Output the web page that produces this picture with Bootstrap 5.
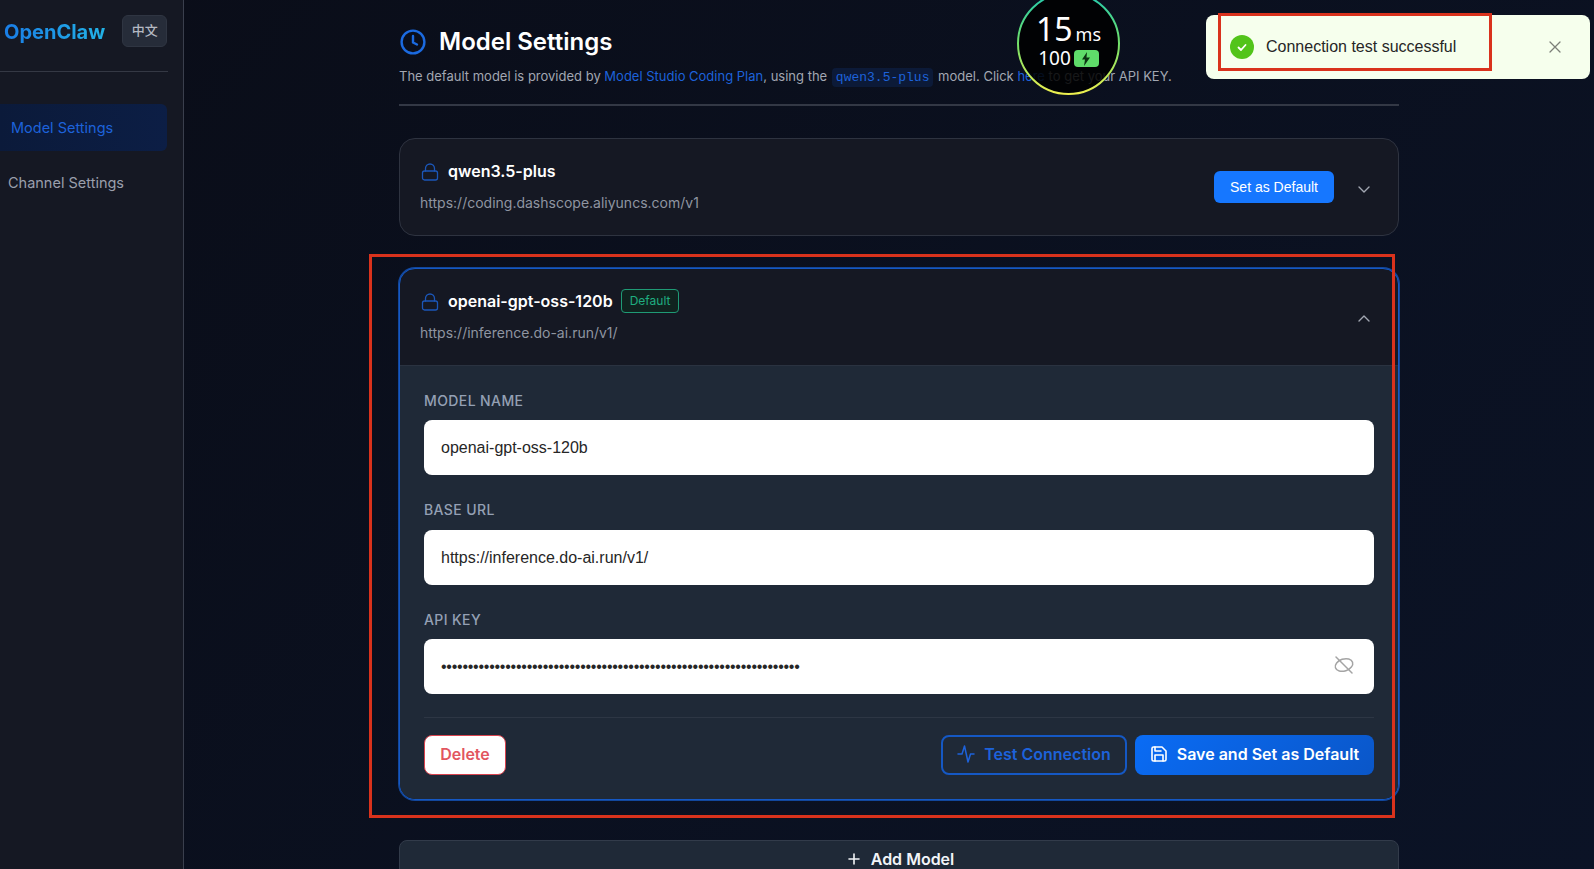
<!doctype html>
<html lang="en">
<head>
<meta charset="utf-8">
<title>Model Settings</title>
<link href="https://cdn.jsdelivr.net/npm/bootstrap@5.3.3/dist/css/bootstrap.min.css" rel="stylesheet">
<style>
  html, body { height: 100%; overflow: hidden; }
  body { background: linear-gradient(135deg, #0a0d18, #0b1326); font-family: Inter, "Noto Sans CJK SC", sans-serif; color: #fff; }
  .app-shell { height: 869px; }

  /* sidebar */
  .side-bar { width: 184px; flex: none; background: #151823; border-right: 1px solid #3a3f4d; }
  .brand-row { height: 72px; margin-right: 15px; padding: 15px 0 0 4px; border-bottom: 1px solid #343844; align-items: flex-start; }
  .brand-name { font-size: 20px; font-weight: 700; line-height: 32px; margin-top: 1px; background: linear-gradient(90deg, #1a7de6, #22b2e6); -webkit-background-clip: text; background-clip: text; color: transparent; }
  .lang-btn { margin-left: 17px; width: 45px; height: 32px; padding: 0; font-size: 13px; font-weight: 500; color: #b4b8c2; background: #262c39; border: 1px solid #2f3542; border-radius: 6px; }
  .side-nav { margin-top: 32px; margin-right: 16px; }
  .side-link { font-size: 14.5px; height: 47px; display: flex; align-items: center; padding: 0 0 0 8px; color: #9a9fac; margin-bottom: 8px; text-decoration: none; }
  .side-link.active { color: #1d62da; padding-left: 11px; background: linear-gradient(90deg, #0b1a3a, #0c1e45); border-radius: 0 6px 6px 0; }

  /* main */
  .main-pane { width: 1000px; margin-left: 215px; padding-top: 27px; }
  .page-title { font-size: 24px; font-weight: 600; line-height: 30px; margin: 0; }
  .head-gap { gap: 13px; padding-left: 1px; }
  .page-sub { font-size: 13px; line-height: 20px; color: #a2a7b2; margin: 9px 0 0; white-space: nowrap; }
  .page-sub a { color: #1d62da; text-decoration: none; }
  .page-sub code { font-family: "Liberation Mono", monospace; font-size: 13px; color: #1d62da; background: #0c1a38; padding: 2px 4px; border-radius: 4px; margin: 0 1px; }
  .head-rule { height: 2px; background: #333845; margin: 16px 0 32px; }

  .model-card { background: #151823; border: 1px solid #2e3340; border-radius: 16px; color: #fff; overflow: hidden; }
  .model-card.open-card { margin-top: 32px; border-color: #1558c4; box-shadow: 0 0 0 1px #12479c; }
  .model-head { height: 96px; padding: 20px 26px 0 20px; background: transparent; border: 0; }
  .lock-icon { margin-left: 1px; margin-top: 1px; }
  .model-name { font-size: 16px; font-weight: 600; line-height: 24px; margin-left: 9px; }
  .model-url { font-size: 14px; line-height: 20px; color: #8f95a1; margin-top: 10px; }
  .set-btn { width: 120px; height: 32px; padding: 0; margin-top: 12px; font-family: "Liberation Sans", sans-serif; font-size: 14px; color: #fff; background: #1677ff; border: 0; border-radius: 6px; }
  .chev-btn { width: 16px; margin-left: 22px; margin-top: 22px; color: #a2a7b2; display: flex; }
  .default-tag { font-size: 12px; font-weight: 400; color: #1fae80; background: #10231f; border: 1px solid #1f9a75; border-radius: 4px; padding: 4px 8px; line-height: 14px; margin-left: 8px; }

  .model-body { background: #1f2937; padding: 25px 24px 24px; height: 434px; border-top: 1px solid #2a3240; }
  .field-label { font-size: 14px; font-weight: 500; letter-spacing: .4px; line-height: 20px; color: #94a0b4; margin: 0 0 9px; display: block; }
  .field-group { margin-bottom: 25px; }
  .field-group.url-field .field-label { margin-bottom: 10px; }
  .field-group.last-field { margin-bottom: 24px; }
  .field-input { height: 55px; font-family: "Liberation Sans", sans-serif; font-size: 16px; color: #262626; background: #fff; border: 0; border-radius: 8px; padding: 0 17px; }
  .field-input:focus { box-shadow: none; }
  .key-input { letter-spacing: -.25px; }
  .eye-btn { right: 19px; top: 50%; transform: translateY(-50%); margin-top: -2px; color: #a4a4a4; display: flex; }
  .foot-rule { height: 1px; background: #2d3644; margin-bottom: 17px; margin-top: -1px; }
  .foot-btn { height: 40px; font-size: 16px; font-weight: 600; border-radius: 8px; padding: 0 0 2px; display: inline-flex; align-items: center; justify-content: center; gap: 9px; }
  .del-btn { width: 82px; color: #e2565f; background: #fff; border: 1px solid #d9434e; }
  .test-btn { width: 186px; color: #1d62da; background: transparent; border: 2px solid #1558c4; }
  .save-btn { width: 239px; color: #fff; background: linear-gradient(135deg, #0a6cf5, #0a56c8); border: 0; }

  .add-btn { margin-top: 40px; height: 46px; width: 100%; font-size: 16px; font-weight: 600; color: #f2f4f7; background: #1f2937; border: 1px solid #323b4a; border-radius: 8px; padding: 0 0 8px 4px; display: flex; align-items: center; justify-content: center; gap: 11px; }

  /* overlays */
  .ping-dial { left: 1017px; top: -8px; width: 103px; height: 103px; border-radius: 50%; background: rgba(0, 0, 0, .86); }
  .ping-ring { left: 0; top: 0; }
  .ping-inner { padding-top: 21px; font-family: "Noto Sans", sans-serif; line-height: 1; text-align: center; }
  .ping-big { font-size: 32px; }
  .ping-unit { font-size: 18px; margin-left: 3px; }
  .ping-batt { font-size: 19px; margin-top: 4px; gap: 3px; }
  .batt-shape { width: 25px; height: 17px; background: #5fdc6a; border-radius: 4px; display: flex; align-items: center; justify-content: center; color: #0b3312; }

  .ok-toast { left: 1206px; top: 15px; width: 384px; height: 64px; background: #f6ffed; border: 0; border-radius: 8px; color: #262626; font-family: "Liberation Sans", sans-serif; font-size: 16px; padding: 0 24px; box-shadow: none; }
  .ok-dot { width: 24px; height: 24px; border-radius: 50%; background: #52c41a; color: #fff; margin-right: 12px; flex: none; }
  .toast-x { color: #7c7f78; display: flex; margin-left: auto; margin-right: 4px; margin-bottom: 1px; }

  .mark-box { border: 3px solid #d9321c; pointer-events: none; }
  .mark-one { left: 1218px; top: 13px; width: 274px; height: 58px; }
  .mark-two { left: 369px; top: 254px; width: 1026px; height: 564px; }
</style>
</head>
<body class="position-relative">
  <div class="app-shell d-flex">
    <aside class="side-bar">
      <div class="brand-row d-flex">
        <span class="brand-name">OpenClaw</span>
        <button class="btn lang-btn" type="button">中文</button>
      </div>
      <nav class="side-nav nav flex-column">
        <a class="side-link active" href="#">Model Settings</a>
        <a class="side-link" href="#">Channel Settings</a>
      </nav>
    </aside>

    <main class="main-pane">
      <div class="d-flex align-items-center head-gap">
        <svg width="26" height="26" viewBox="0 0 26 26" fill="none" stroke="#1b6ae0" stroke-width="2.4" stroke-linecap="round" stroke-linejoin="round"><circle cx="13" cy="13" r="11.4"/><path d="M13 7v6.5l4 2"/></svg>
        <h1 class="page-title">Model Settings</h1>
      </div>
      <p class="page-sub">The default model is provided by <a href="#">Model Studio Coding Plan</a>, using the <code>qwen3.5-plus</code> model. Click <a href="#">here</a> to get your API KEY.</p>
      <div class="head-rule"></div>

      <div class="card model-card">
        <div class="card-header model-head d-flex align-items-start">
          <div class="flex-grow-1">
            <div class="d-flex align-items-center">
              <svg class="lock-icon" width="18" height="18" viewBox="0 0 18 18" fill="none" stroke="#1b56b8" stroke-width="1.3" stroke-linecap="round"><rect x="1.5" y="8" width="15" height="9" rx="2"/><path d="M4.5 8V5.5a4.5 4.5 0 0 1 9 0V8"/></svg>
              <span class="model-name">qwen3.5-plus</span>
            </div>
            <div class="model-url">https://coding.dashscope.aliyuncs.com/v1</div>
          </div>
          <button class="btn set-btn" type="button">Set as Default</button>
          <span class="chev-btn"><svg width="16" height="16" viewBox="0 0 16 16" fill="none" stroke="currentColor" stroke-width="1.4" stroke-linecap="round" stroke-linejoin="round"><path d="M3 6l5 5 5-5"/></svg></span>
        </div>
      </div>

      <div class="card model-card open-card">
        <div class="card-header model-head d-flex align-items-start">
          <div class="flex-grow-1">
            <div class="d-flex align-items-center">
              <svg class="lock-icon" width="18" height="18" viewBox="0 0 18 18" fill="none" stroke="#1b56b8" stroke-width="1.3" stroke-linecap="round"><rect x="1.5" y="8" width="15" height="9" rx="2"/><path d="M4.5 8V5.5a4.5 4.5 0 0 1 9 0V8"/></svg>
              <span class="model-name">openai-gpt-oss-120b</span>
              <span class="default-tag">Default</span>
            </div>
            <div class="model-url">https://inference.do-ai.run/v1/</div>
          </div>
          <span class="chev-btn"><svg width="16" height="16" viewBox="0 0 16 16" fill="none" stroke="currentColor" stroke-width="1.4" stroke-linecap="round" stroke-linejoin="round"><path d="M3 10l5-5 5 5"/></svg></span>
        </div>
        <div class="card-body model-body">
          <div class="field-group">
            <label class="field-label">MODEL NAME</label>
            <input class="form-control field-input" type="text" value="openai-gpt-oss-120b">
          </div>
          <div class="field-group url-field">
            <label class="field-label">BASE URL</label>
            <input class="form-control field-input" type="text" value="https://inference.do-ai.run/v1/">
          </div>
          <div class="field-group last-field">
            <label class="field-label">API KEY</label>
            <div class="position-relative">
              <input class="form-control field-input key-input" type="password" value="aaaaaaaaaaaaaaaaaaaaaaaaaaaaaaaaaaaaaaaaaaaaaaaaaaaaaaaaaaaaaaaaaaa">
              <span class="eye-btn position-absolute"><svg width="22" height="22" viewBox="0 0 22 22" fill="none" stroke="currentColor" stroke-width="1.5" stroke-linecap="round"><ellipse cx="11" cy="11" rx="9" ry="6" transform="rotate(-18 11 11)"/><path d="M3 3l16 16"/></svg></span>
            </div>
          </div>
          <div class="foot-rule"></div>
          <div class="d-flex align-items-center">
            <button class="btn foot-btn del-btn" type="button">Delete</button>
            <button class="btn foot-btn test-btn ms-auto" type="button">
              <svg width="18" height="20" viewBox="0 0 18 20" fill="none" stroke="currentColor" stroke-width="1.5" stroke-linecap="round" stroke-linejoin="round"><path d="M1 10h4l2.500-8 3.500 16 2.500-8h3.500"/></svg>
              Test Connection
            </button>
            <button class="btn foot-btn save-btn ms-2" type="button">
              <svg width="18" height="18" viewBox="0 0 18 18" fill="none" stroke="currentColor" stroke-width="1.600" stroke-linecap="round" stroke-linejoin="round"><path d="M3.500 2h8.500l4 4v8.500a1.500 1.500 0 0 1-1.500 1.500h-11a1.500 1.500 0 0 1-1.500-1.500v-11a1.500 1.500 0 0 1 1.500-1.500z"/><path d="M5 16v-6h8v6M5 2v4h6"/></svg>
              Save and Set as Default
            </button>
          </div>
        </div>
      </div>

      <button class="btn add-btn" type="button">
        <svg width="12" height="12" viewBox="0 0 12 12" fill="none" stroke="currentColor" stroke-width="1.600" stroke-linecap="round"><path d="M6 1v10M1 6h10"/></svg>
        Add Model
      </button>
    </main>
  </div>

  <div class="ping-dial position-absolute">
    <svg class="ping-ring position-absolute" width="103" height="103" viewBox="0 0 103 103" fill="none">
      <defs><linearGradient id="ringGrad" x1="0" y1="0" x2="0" y2="1"><stop offset="0" stop-color="#22c9b0"/><stop offset=".5" stop-color="#72e06a"/><stop offset="1" stop-color="#eef050"/></linearGradient></defs>
      <circle cx="51.500" cy="51.500" r="50.500" stroke="url(#ringGrad)" stroke-width="2"/>
    </svg>
    <div class="ping-inner">
      <div><span class="ping-big">15</span><span class="ping-unit">ms</span></div>
      <div class="ping-batt d-flex justify-content-center align-items-center">100
        <span class="batt-shape"><svg width="10" height="14" viewBox="0 0 10 14" fill="currentColor"><path d="M6 0L1 7.500h3l-1 6.500 6-8.500H5.500z"/></svg></span>
      </div>
    </div>
  </div>

  <div class="toast show ok-toast position-absolute d-flex align-items-center" role="alert">
    <span class="ok-dot d-flex align-items-center justify-content-center">
      <svg width="14" height="14" viewBox="0 0 14 14" fill="none" stroke="currentColor" stroke-width="1.800" stroke-linecap="round" stroke-linejoin="round"><path d="M3.500 7.500l2.500 2.500 4.500-5"/></svg>
    </span>
    <span>Connection test successful</span>
    <span class="toast-x"><svg width="14" height="14" viewBox="0 0 14 14" fill="none" stroke="currentColor" stroke-width="1.300" stroke-linecap="round"><path d="M2 2l10 10M12 2L2 12"/></svg></span>
  </div>

  <div class="mark-box mark-one position-absolute"></div>
  <div class="mark-box mark-two position-absolute"></div>
  <script src="https://cdn.jsdelivr.net/npm/bootstrap@5.3.3/dist/js/bootstrap.bundle.min.js"></script>
</body>
</html>
